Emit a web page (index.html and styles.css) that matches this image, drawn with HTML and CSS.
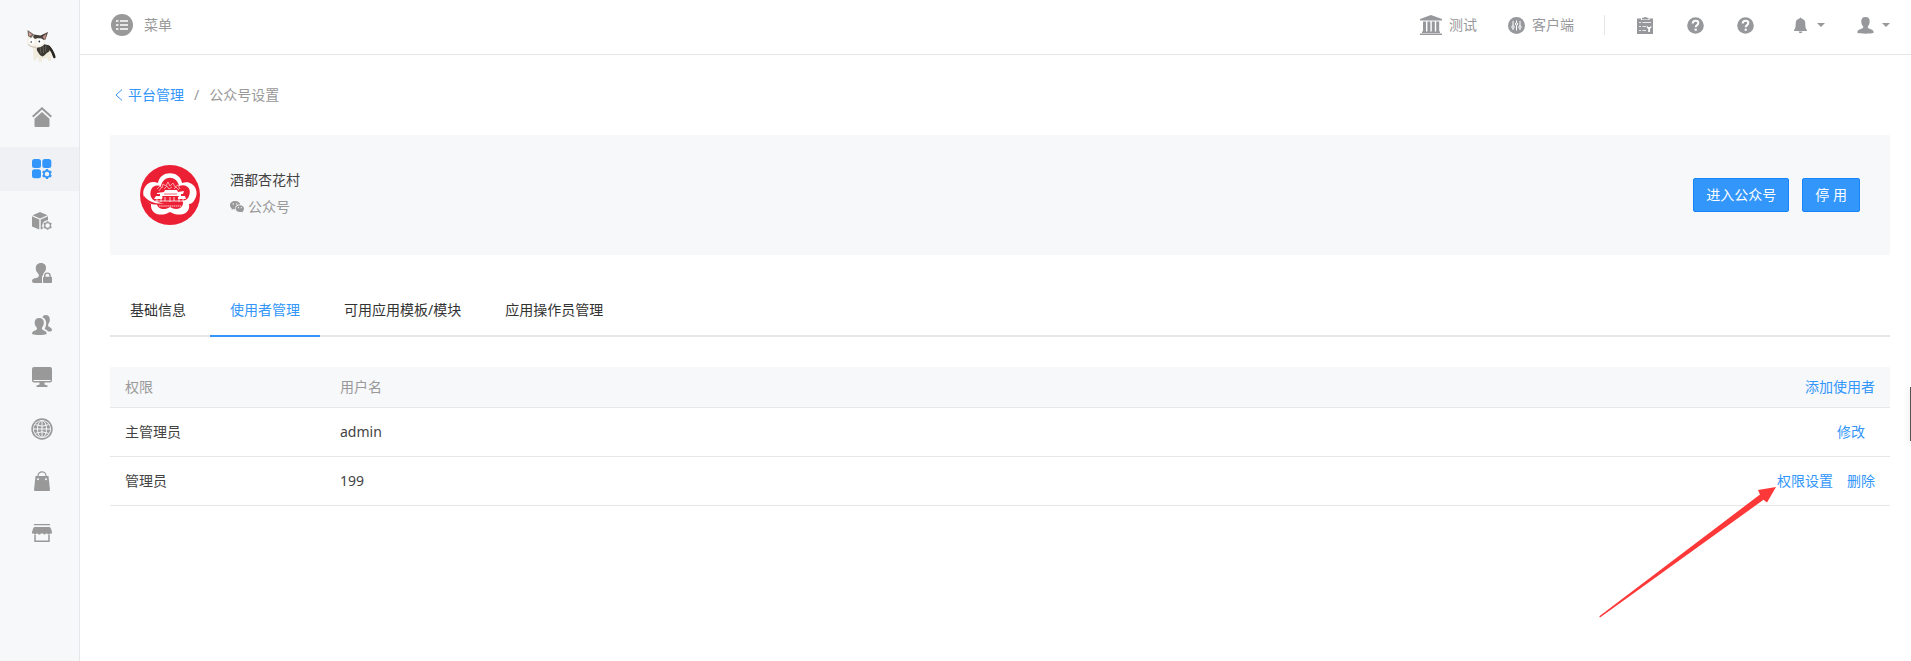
FILE: index.html
```
<!DOCTYPE html>
<html lang="zh-CN">
<head>
<meta charset="utf-8">
<title>公众号设置</title>
<link rel="stylesheet" href="styles.css">
</head>
<body>
<div class="layout">
  <aside class="sidebar">
    <a class="logo" href="#" aria-label="首页">
      <svg width="30" height="32" viewBox="0 0 30 32">
        <path d="M17 15c4-1 7 0 8.500 3 2 3 3.500 6 4 8.500.3 2-1.500 2.500-2.300 1-.7-2.500-2-5-3.700-6.500z" fill="#28251f"/>
        <path d="M7 17l4-1 12 3 2.500 4-.3 7.500-2.700 1-1.500-4-2 1-3 .5-.5 3-2.500-.3-.7-4-2 .3-.3 2.500-2.500-.3z" fill="#f1ebdd"/>
        <path d="M10.500 15.500c4-1.200 9-1.500 12.500.5 1.500 2 1 5-.5 6-2.500 1-4 4-6 4.500-3-1-4-4-5.500-6z" fill="#3b3831"/>
        <path d="M14 15.500l1 8M17 15l.5 8M20 15.500l-.5 6" stroke="#77736a" stroke-width=".7" fill="none"/>
        <path d="M1.500 0L8 5l6.500.7L22 2l-2.500 7-1.500 5.500c-3 4-12 4.300-16 .5C-.3 12.500.5 9 2.500 6z" fill="#f6f2ea"/>
        <path d="M1.500 0L8 4.500 5 8 2 6z" fill="#75665e"/>
        <path d="M2.600 2L6 4.500 3.500 6.500z" fill="#d9a69d"/>
        <path d="M8 4.500l6.500 1L22 2l-2.500 7.500L15 10l-3-2-3 1-2-2z" fill="#45413a"/>
        <path d="M20.500 3.500l-4 3.500 2.500 2.500z" fill="#c9938b"/>
        <circle cx="5.500" cy="11.500" r="3" fill="#fff"/><circle cx="14" cy="11.500" r="3.300" fill="#fff"/>
        <circle cx="5.200" cy="12" r=".8" fill="#333"/><circle cx="13.300" cy="11.500" r=".9" fill="#333"/>
        <path d="M2 14.500c2 2 5 2.800 8 2.700" stroke="#b9a998" stroke-width=".8" fill="none"/>
      </svg>
    </a>
    <nav class="side-nav" aria-label="主导航">
      <a class="side-link" href="#" aria-label="首页"><svg class="icon-20" viewBox="0 0 20 20"><path d="M.7 9.800L10 1.300l9.300 8.500" fill="none" stroke="currentColor" stroke-width="2"/><path d="M10 5l7.500 6.700V19q0 1-1 1h-13q-1 0-1-1v-7.300z"/></svg></a>
      <a class="side-link side-link-active" href="#" aria-label="平台管理"><svg class="icon-20" viewBox="0 0 20 20"><rect width="9" height="9" rx="2.500"/><rect x="10.300" width="9" height="9" rx="2.500"/><rect y="10.300" width="9" height="9" rx="2.500"/><g fill="none" stroke="currentColor"><circle cx="15" cy="15" r="3.100" stroke-width="1.700"/><path d="M15 10v1.500M15 18.500V20M10.700 12.500l1.300.8M18 16.700l1.300.8M10.700 17.500l1.300-.8M18 13.300l1.300-.8" stroke-width="2.200"/></g></svg></a>
      <a class="side-link" href="#" aria-label="应用管理"><svg class="icon-20" viewBox="0 0 20 20"><path d="M8 1l7.500 3.200L8 7.600.6 4.200zM0 5.300l7.300 3.300v10L0 15.500zM8.700 8.600L16 5.300v4a5.400 5.400 0 0 0-5 8.200l-2.300 1z"/><g fill="none" stroke="currentColor"><circle cx="15.600" cy="14.500" r="2.900" stroke-width="1.300"/><path d="M15.600 10.200v1.400M15.600 17.400v1.400M11.800 12.300l1.300.8M18 15.900l1.400.8M11.800 16.700l1.300-.8M18 13.100l1.400-.8" stroke-width="1.800"/></g></svg></a>
      <a class="side-link" href="#" aria-label="权限管理"><svg class="icon-20" viewBox="0 0 20 20"><path d="M9 0c3.500 0 5.300 2.300 5 5.500-.2 2.200-1.300 3.500-2.500 4.800-.4 1.200 0 1.900-1.500 2.900V20H2Q0 20 0 18c0-1.500 1-2.300 2.700-2.700 2.200-.5 4.200-1 4.200-2.600 0-1.200-.5-1.500-1-2.400C4.700 9 3.800 7.600 3.800 5.500 3.700 2.300 5.500 0 9 0z"/><path d="M12.700 14v-1.200a2.700 2.700 0 0 1 5.400 0V14" fill="none" stroke="currentColor" stroke-width="1.400"/><rect x="11" y="13.700" width="9" height="6.300" rx=".8"/></svg></a>
      <a class="side-link" href="#" aria-label="用户管理"><svg class="icon-20" viewBox="0 0 20 20"><path d="M13.500 0c3 0 4.400 1.800 4.300 4.800 0 2.200-.8 3.200-1.600 4.500-.3 1.700.1 2.300 1.500 3 1.600.7 2.300 1.600 2.300 3.400-1 .7-2.300.9-4 .8-.7-1.400-1.600-2-3.200-2.600 0-1 .3-1.300.7-2 1.500-4 .6-8-3-9.600C11 .8 12 0 13.500 0z"/><path d="M7.200 3c3.200 0 4.900 1.900 4.600 5.200-.1 1.800-.9 3.300-1.900 4.600-.2 1.400.3 2 2 2.700 1.700.5 2.800 1.500 2.800 3.500-3.600 1.300-11 1.300-14.700 0 0-2.100 1.200-3 3-3.500 1.500-.5 2.200-1.200 1.900-2.700C3.700 11.500 2.800 10 2.700 8.200 2.500 5 4 3 7.200 3z"/></svg></a>
      <a class="side-link" href="#" aria-label="系统管理"><svg class="icon-20" viewBox="0 0 20 20"><path d="M2 0h16q2 0 2 2v11.500q0 2-2 2H2q-2 0-2-2V2q0-2 2-2zM7.500 15h5v2.500l3 1V20h-11v-1.500l3-1z"/><path d="M1.500 13.500h17" class="cut-line"/></svg></a>
      <a class="side-link" href="#" aria-label="站点管理"><svg class="icon-22" viewBox="0 0 22 22"><circle cx="11" cy="11" r="9.900" fill="none" stroke="currentColor" stroke-width="1.600"/><circle cx="11" cy="11" r="8.200"/><g class="cut-line"><path d="M11 3v16M3 11h16M4.500 6.700q6.500 3 13 0M4.500 15.300q6.500-3 13 0"/><ellipse cx="11" cy="11" rx="4.500" ry="8.400"/></g></svg></a>
      <a class="side-link" href="#" aria-label="商城"><svg class="icon-20" viewBox="0 0 20 20"><path d="M6 7V4.800a4 4 0 0 1 8 0V7" fill="none" stroke="currentColor" stroke-width="1.200"/><path d="M3.500 5h13l1.500 14q.1 1-1 1H3q-1.100 0-1-1z"/><circle cx="6" cy="8.300" r="1" class="cut"/><circle cx="14" cy="8.300" r="1" class="cut"/></svg></a>
      <a class="side-link" href="#" aria-label="店铺"><svg class="icon-20" viewBox="0 0 20 20"><path d="M2 1h16v1.300H2zM3 4h14q1.200 0 1.700 1l1.300 4v1.500h-1.500l-1 1h-1.500l-1-1h-1l-1 1H12l-1-1H9l-1 1H6.500l-1-1h-1l-1 1H2.700l-1.200-1H0V9l1.300-4Q1.800 4 3 4z"/><path d="M3 12v6.200h14V12" fill="none" stroke="currentColor" stroke-width="1.500"/></svg></a>
    </nav>
  </aside>

  <div class="page">
    <header class="topbar">
      <a class="menu" href="#"><svg class="icon-22" viewBox="0 0 22 22"><circle cx="11" cy="11" r="11"/><path d="M5 7h2.500M9 7h8M5 11h2.500M9 11h8M5 15h2.500M9 15h8" stroke="#fff" stroke-width="1.500"/></svg>菜单</a>
      <div class="tools">
        <a class="tool tool-site" href="#"><svg class="icon-22" viewBox="0 0 22 22"><path d="M11 1l11 4v1.500H0V5zM2 17.500h18V19H2zM0 19.500h22V21H0zM3 7.500h3v10H3zM7.400 7.500h3v10h-3zM11.800 7.500h3v10h-3zM16.200 7.500h3v10h-3z"/></svg>测试</a>
        <a class="tool tool-client" href="#"><svg class="icon-17" viewBox="0 0 17 17"><circle cx="8.500" cy="8.500" r="8.500"/><g stroke="#fff" stroke-width="1" fill="#97989b"><path d="M5 4v9M8.500 3.500v10M12 4v9"/><circle cx="5" cy="10" r="1.200"/><circle cx="8.500" cy="7" r="1.200"/><circle cx="12" cy="10" r="1.200"/></g></svg>客户端</a>
        <span class="divider"></span>
        <div class="shortcuts">
          <a class="tool" href="#" aria-label="工单"><svg class="icon-17" viewBox="0 0 17 17"><path d="M0 1.500h4V3h8.500V1.500h3.500V17H0zM5 .8h1.500q1.500-1.500 3.500 0h1.500V2.500H5z"/><path d="M2 5.500h2M5.500 5.500H14M2 9.500h2M5.500 9.500H9M2 13.500h2M5.500 13.500H9" stroke="#fff" stroke-width=".8"/><path d="M9.800 8.500v2.200l1.400 1V15H13v-3.300l1.300-1V8.500l-1.200 1.400h-2z" fill="#fff"/></svg></a>
          <a class="tool" href="#" aria-label="帮助"><svg class="icon-17" viewBox="0 0 17 17"><circle cx="8.500" cy="8.500" r="8.300"/><path d="M5.700 6.500q.1-2.800 2.900-2.800t2.700 2.400c0 2-2.600 2-2.600 4.100" fill="none" stroke="#fff" stroke-width="2"/><path d="M7.600 11.700h2.200v2H7.600z" fill="#fff"/></svg></a>
          <a class="tool" href="#" aria-label="常见问题"><svg class="icon-17" viewBox="0 0 17 17"><circle cx="8.500" cy="8.500" r="8.300"/><path d="M5.700 6.500q.1-2.800 2.900-2.800t2.700 2.400c0 2-2.600 2-2.600 4.100" fill="none" stroke="#fff" stroke-width="2"/><path d="M7.600 11.700h2.200v2H7.600z" fill="#fff"/></svg></a>
        </div>
        <button class="tool drop" type="button" aria-label="消息"><svg class="icon-17" viewBox="0 0 17 17"><path d="M7.500 1.500q1-1.800 2 0c2.700.5 3.800 2.500 3.800 5 0 4 .5 5 1.700 6.700v.8H2v-.8c1.200-1.700 1.700-2.700 1.700-6.700 0-2.500 1.100-4.500 3.800-5zM6.500 14.600h4q-.3 1.600-2 1.600t-2-1.600z"/></svg><i class="caret"></i></button>
        <button class="tool drop" type="button" aria-label="账户"><svg class="icon-17" viewBox="0 0 17 17"><path d="M8.500 0c3 0 4.400 2 4.200 4.800-.1 2-.8 3.500-1.900 4.800-.2 1.400.4 1.900 2.300 2.500 2.300.6 3.600 1.400 3.600 3.700-3.600 1.200-12.800 1.200-16.400 0 0-2.300 1.300-3.100 3.600-3.700 1.900-.6 2.500-1.100 2.300-2.500-1.100-1.300-1.800-2.800-1.900-4.800C4.100 2 5.500 0 8.500 0z"/></svg><i class="caret"></i></button>
      </div>
    </header>

    <main class="content">
      <nav class="crumbs" aria-label="面包屑">
        <a class="back" href="#"><svg width="8" height="12" viewBox="0 0 8 12"><path d="M7 .5L1 6l6 5.500" fill="none" stroke="currentColor"/></svg>平台管理</a>
        <span class="slash">/</span>
        <span>公众号设置</span>
      </nav>

      <section class="account">
        <svg class="avatar" viewBox="0 0 60 60" role="img" aria-label="酒都杏花村">
          <circle cx="30" cy="30" r="30" fill="#ec2034"/>
          <path d="M18 18C20 5 40 5 42 18C53 14 60 26 55 34C53 38 51 39 49 39C51 50 38 52 30 47C22 52 10 50 11 39C4 36 1 28 5 22C8 17 13 16 18 18Z" fill="#fff"/>
          <path d="M21 21C23 10 37 10 39 21C47 18 52 24 49 31C48 34 46 35 43 36C44 44 36 46 30 42C24 46 16 44 17 37C12 35 9 31 11 25C13 20 17 20 21 21Z" fill="#ec2034"/>
          <path d="M4 31c5 5 11 6 19 7.500C15 41 7 39 3 33z" fill="#ec2034"/>
          <path d="M6 30c4 5 10 7 18 8.500C16 39 9 37 5 32z" fill="#fff"/>
          <g fill="none" stroke="#ffc2c8" stroke-width=".8"><path d="M17 24l3-3 2 2 1-4 3 2 2-4 2 4 3-3 2 4 3-2 2 4M19 26l2-3M24 24l3-3 2 3 3-2M34 24l2-2 3 3"/></g>
          <path d="M17 28l7-1 1-2h12l1 2 6-1-1 3h-2v2h4l1 3h-8v-3H23l-1 3h-8l2-3h4v-2h-3z" fill="#fff"/>
          <path d="M24 29h13M22 31.500h17" stroke="#ec2034" stroke-width=".7"/>
          <path d="M17 34v3M21 34v3M25 32v4M30 32v5M34 32v4M39 34v3M43 34v3M15 36h31" stroke="#fff" stroke-width=".8"/>
          <path d="M19 41h22" stroke="#ffd7da" stroke-width="1.200" stroke-dasharray="1.500 .6"/>
        </svg>
        <div class="account-text">
          <div class="account-name">酒都杏花村</div>
          <div class="account-type"><svg width="14" height="12" viewBox="0 0 14 12"><path d="M5 0c3 0 5 1.500 5.200 3.400C7 3.300 4.700 5.300 5.300 8.400c-.8 0-1.300-.1-2-.3L1.500 9l.4-1.500C.7 6.700 0 5.500 0 4.200 0 1.900 2.200 0 5 0z"/><path d="M9.900 4.200c2.400 0 4.100 1.500 4.100 3.500 0 1-.5 1.900-1.400 2.600l.3 1.300-1.500-.7c-3.300.7-5.600-1-5.600-3.200 0-2 1.700-3.500 4.100-3.500z"/><g class="cut"><circle cx="3.300" cy="3" r=".7"/><circle cx="6.700" cy="3" r=".7"/><circle cx="8.500" cy="6.700" r=".6"/><circle cx="11.300" cy="6.700" r=".6"/></g></svg>公众号</div>
        </div>
        <div class="actions">
          <button class="btn" type="button">进入公众号</button>
          <button class="btn" type="button">停 用</button>
        </div>
      </section>

      <nav class="tabs" aria-label="设置">
        <a class="tab" href="#">基础信息</a>
        <a class="tab tab-active" href="#">使用者管理</a>
        <a class="tab" href="#">可用应用模板/模块</a>
        <a class="tab" href="#">应用操作员管理</a>
      </nav>

      <div class="table-wrap">
        <table class="users">
          <thead>
            <tr><th class="col-role">权限</th><th>用户名</th><th class="col-ops"><a href="#">添加使用者</a></th></tr>
          </thead>
          <tbody>
            <tr><td>主管理员</td><td>admin</td><td class="col-ops"><div class="ops ops-inset"><a href="#">修改</a></div></td></tr>
            <tr><td>管理员</td><td>199</td><td class="col-ops"><div class="ops"><a href="#">权限设置</a><a href="#">删除</a></div></td></tr>
          </tbody>
        </table>
        <svg class="pointer" width="178" height="132" viewBox="0 0 178 132" aria-hidden="true"><path d="M177 1l-9 15.500-3.500-2.700L1 131.500l-.7-1.200L161 8.500l-2-4.500z" fill="#fd3839"/></svg>
      </div>
    </main>
  </div>
</div>
<div class="side-handle"></div>
</body>
</html>
```
FILE: styles.css
```
* { box-sizing: border-box; }

body {
  margin: 0;
  background: #fff;
  color: #434343;
  font: 14px/20px "Noto Sans", "Noto Sans CJK SC", sans-serif;
}

a { color: #3296fa; text-decoration: none; }
svg { display: block; flex: none; fill: currentColor; }
.icon-17 { width: 17px; height: 17px; }
.icon-20 { width: 20px; height: 20px; }
.icon-22 { width: 22px; height: 22px; }
.cut { fill: #f7f8fa; }
.cut-line { fill: none; stroke: #f7f8fa; stroke-width: 1; }

.layout { display: flex; min-height: 100vh; }

.sidebar {
  flex: none;
  width: 80px;
  background: #f7f8fa;
  border-right: 1px solid #e7e7eb;
}
.logo { display: block; padding: 30px 0 33px 26px; }
.side-nav { display: flex; flex-direction: column; gap: 8px; }
.side-link {
  display: flex;
  align-items: center;
  justify-content: center;
  height: 44px;
  padding-left: 5px;
  color: #999;
}
.side-link-active { background: #eff1f5; color: #3296fa; }

.page { flex: 1; min-width: 0; }

.topbar {
  display: flex;
  justify-content: space-between;
  align-items: center;
  height: 55px;
  padding: 0 21px 4px 31px;
  border-bottom: 1px solid #e7e7e7;
}
.menu { display: flex; align-items: center; gap: 11px; color: #999; }
.tools { display: flex; align-items: center; }
.tool {
  display: flex;
  align-items: center;
  gap: 7px;
  padding: 0;
  border: 0;
  background: none;
  color: #97989b;
  font: inherit;
}
.tool-client { margin-left: 31px; }
.divider { width: 1px; height: 20px; margin: 0 32px 0 30px; background: #e7e7e7; }
.shortcuts { display: flex; gap: 33px; }
.drop { gap: 8px; margin-left: 38px; }
.drop + .drop { margin-left: 32px; }
.caret {
  border: 4px solid transparent;
  border-top-color: currentColor;
  border-bottom-width: 0;
}

.content { padding: 30px 21px 0 30px; }

.crumbs { display: flex; align-items: center; padding-left: 5px; color: #999; }
.back { display: flex; align-items: center; gap: 5px; }
.slash { padding: 0 10px; }

.account {
  display: flex;
  align-items: center;
  margin-top: 30px;
  padding: 30px;
  background: #f7f8fa;
}
.avatar { width: 60px; height: 60px; }
.account-text { margin-left: 30px; padding-bottom: 4px; }
.account-name { margin-bottom: 7px; }
.account-type { display: flex; align-items: center; gap: 4px; color: #999; }
.actions { display: flex; gap: 13px; margin-left: auto; }
.btn {
  height: 34px;
  padding: 0 12px;
  border: 1px solid #1684fc;
  border-radius: 2px;
  background: #3296fa;
  color: #fff;
  font: inherit;
}

.tabs {
  display: flex;
  gap: 4px;
  margin-top: 30px;
  border-bottom: 2px solid #e7e7e7;
}
.tab {
  margin-bottom: -2px;
  padding: 15px 20px;
  border-bottom: 2px solid transparent;
  color: #333;
}
.tab-active { border-color: #3296fa; color: #3296fa; }

.table-wrap { position: relative; margin-top: 30px; }
.users { width: 100%; border-collapse: separate; border-spacing: 0; }
.users th, .users td {
  padding: 14px 15px;
  border-bottom: 1px solid #e7e7e7;
  text-align: left;
  font-weight: 400;
}
.users th { padding: 10px 15px; background: #f7f8fa; color: #999; }
.users .col-role { width: 215px; }
.users .col-ops { text-align: right; }
.ops { display: flex; justify-content: flex-end; gap: 14px; }
.users .ops-inset { padding-right: 10px; }

.pointer { position: absolute; top: 119px; right: 113px; pointer-events: none; }

.side-handle {
  position: fixed;
  top: 387px;
  right: 0;
  width: 1px;
  height: 54px;
  background: #555;
  box-shadow: 0 2px 6px rgba(0, 0, 0, .3);
}
```
